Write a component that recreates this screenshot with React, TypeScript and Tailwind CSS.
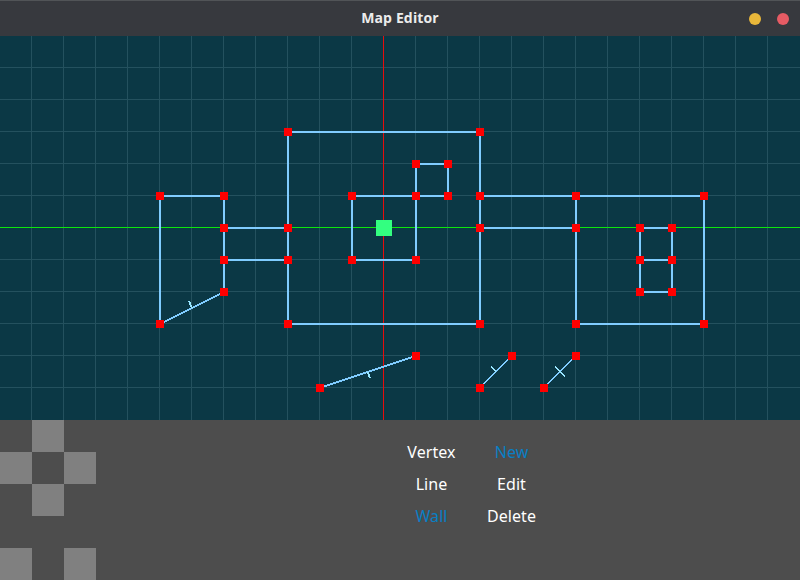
const gridX = Array.from({ length: 24 }, (_, i) => 31 + i * 32);
const gridY = Array.from({ length: 11 }, (_, i) => 31 + i * 32);

type Segment = [number, number, number, number];

const walls: Segment[] = [
  [160, 160, 224, 160], [160, 160, 160, 288], [224, 160, 224, 256],
  [224, 192, 288, 192], [224, 224, 288, 224],
  [288, 96, 480, 96], [288, 96, 288, 288], [288, 288, 480, 288], [480, 96, 480, 288],
  [352, 160, 448, 160], [352, 160, 352, 224], [352, 224, 416, 224], [416, 128, 416, 224],
  [416, 128, 448, 128], [448, 128, 448, 160],
  [480, 160, 704, 160], [480, 192, 576, 192], [576, 160, 576, 288],
  [576, 288, 704, 288], [704, 160, 704, 288],
  [640, 192, 672, 192], [640, 224, 672, 224], [640, 256, 672, 256],
  [640, 192, 640, 256], [672, 192, 672, 256],
];

const vertices: [number, number][] = [
  [160, 160], [224, 160], [224, 192], [224, 224], [224, 256], [160, 288],
  [288, 96], [480, 96], [288, 192], [288, 224], [288, 288], [480, 288],
  [352, 160], [416, 160], [448, 160], [416, 128], [448, 128], [352, 224], [416, 224],
  [480, 160], [480, 192], [576, 160], [576, 192], [704, 160], [576, 288], [704, 288],
  [640, 192], [672, 192], [640, 224], [672, 224], [640, 256], [672, 256],
  [320, 352], [416, 320], [480, 352], [512, 320], [544, 352], [576, 320],
];

const slopes: Segment[] = [[160, 288, 224, 256], [320, 352, 416, 320], [480, 352, 512, 320], [544, 352, 576, 320]];
const normals: Segment[] = [[189, 265, 192, 272], [368, 336, 370, 342], [491, 331, 496, 336], [555, 331, 565, 341]];

// Aliased two-pixel line, stepped along its longer axis.
function steppedLine([x1, y1, x2, y2]: Segment) {
  const dx = x2 - x1;
  const dy = y2 - y1;
  const alongX = Math.abs(dx) >= Math.abs(dy);
  const count = alongX ? dx : dy;
  let d = "";
  for (let i = 0; i < count; i++) {
    const t = (i + 0.5) / count;
    d += alongX
      ? `M${x1 + i} ${Math.round(y1 + dy * t - 0.01) - 1}h1v2h-1z`
      : `M${Math.round(x1 + dx * t - 0.01) - 1} ${y1 + i}h2v1h-2z`;
  }
  return d;
}

const tiles = [
  [0, 1, 0],
  [1, 0, 1],
  [0, 1, 0],
  [0, 0, 0],
  [1, 0, 1],
];

function MapView() {
  return (
    <svg className="block h-[384px] w-[800px] bg-[#0b3845]" viewBox="0 0 800 384" shapeRendering="crispEdges">
      {gridX.map((x) => <rect key={x} x={x} y="0" width="1" height="384" fill="#24515e" />)}
      {gridY.map((y) => <rect key={y} x="0" y={y} width="800" height="1" fill="#24515e" />)}
      <rect x="383" y="0" width="1" height="384" fill="#e60d0d" />
      <rect x="0" y="191" width="800" height="1" fill="#0de60d" />
      {walls.map(([a, b, c, d], i) => (
        <rect key={i} x={a - 1} y={b - 1} width={c - a + 2} height={d - b + 2} fill="#80ccff" />
      ))}
      {slopes.map((s, i) => <path key={i} d={steppedLine(s)} fill="#80ccff" />)}
      {normals.map((s, i) => <path key={i} d={steppedLine(s)} fill="#99e6ff" />)}
      {vertices.map(([x, y], i) => <rect key={i} x={x - 4} y={y - 4} width="8" height="8" fill="#ff0000" />)}
      <rect x="376" y="184" width="16" height="16" fill="#33ff80" />
    </svg>
  );
}

function Option({ label, active }: { label: string; active?: boolean }) {
  return (
    <span className={`flex h-8 items-center justify-center whitespace-nowrap ${active ? "text-[#087fc4]" : "text-white"}`}>
      {label}
    </span>
  );
}

export default function App() {
  return (
    <div className="flex h-[580px] w-[800px] flex-col overflow-hidden bg-[#4d4d4d]">
      <header className="grid h-9 shrink-0 grid-cols-[1fr_auto_1fr] items-center border-t border-[#515457] bg-[#37393e] pr-[11px]">
        <span />
        <h1 className="-mt-0.5 pl-[11px] font-['Open_Sans','Noto_Sans',sans-serif] text-[14px] leading-5 font-bold tracking-[0.15px] text-[#ececec]">Map Editor</h1>
        <div className="flex justify-end gap-4">
          <span className="size-3 rounded-full bg-[#e9b73a]" />
          <span className="size-3 rounded-full bg-[#e65b64]" />
        </div>
      </header>
      <MapView />
      <section className="flex h-[160px] shrink-0">
        <div className="grid h-[160px] w-24 grid-cols-3">
          {tiles.flat().map((on, i) => <span key={i} className={on ? "size-8 bg-[#808080]" : "size-8"} />)}
        </div>
        <div className="ml-[295.5px] grid h-24 w-[160px] grid-cols-2 pt-4 font-['Noto_Sans',sans-serif] text-[16px] tracking-[0.08px]">
          <Option label="Vertex" />
          <Option label="New" active />
          <Option label="Line" />
          <Option label="Edit" />
          <Option label="Wall" active />
          <Option label="Delete" />
        </div>
      </section>
    </div>
  );
}
